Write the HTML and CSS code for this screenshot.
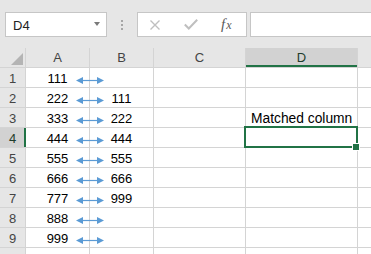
FILE: index.html
```html
<!DOCTYPE html>
<html>
<head>
<meta charset="utf-8">
<link rel="stylesheet" href="styles.css">
</head>
<body>
<div class="toolbar">
  <div class="namebox"><span class="ref">D4</span><span class="caret"></span></div>
  <div class="grip"><i></i><i></i><i></i></div>
  <div class="fxbar">
    <svg class="ic-x" width="12" height="10" viewBox="0 0 12 10"><path d="M1.5 0.5 L10.5 9.5 M10.5 0.5 L1.5 9.5" stroke="#bfbfbf" stroke-width="1.4" fill="none"/></svg>
    <svg class="ic-check" width="14" height="11" viewBox="0 0 14 11"><path d="M0.8 5.5 L4.8 9.5 L13.2 0.8" stroke="#bfbfbf" stroke-width="2" fill="none"/></svg>
    <span class="fx">f<span class="fx-x">x</span></span>
  </div>
  <div class="formula"></div>
</div>
<div class="sheet">
  <div class="corner"><svg width="12" height="12" viewBox="0 0 12 12"><polygon points="12,0 12,12 0,12" fill="#b4b4b4"/></svg></div>
  <div class="colh">A</div><div class="colh">B</div><div class="colh">C</div><div class="colh sel">D</div><div class="colh"></div>

  <div class="rowh">1</div><div class="cell ctr">111<span class="arrow"><svg width="28" height="7" viewBox="0 0 28 7"><line x1="6" y1="3.5" x2="22" y2="3.5" stroke="#5b9bd5" stroke-width="1.2"/><polygon points="0,3.5 7,0 7,7" fill="#5b9bd5"/><polygon points="28,3.5 21,0 21,7" fill="#5b9bd5"/></svg></span></div><div class="cell ctr"></div><div class="cell"></div><div class="cell"></div><div class="cell"></div>

  <div class="rowh">2</div><div class="cell ctr">222<span class="arrow"><svg width="28" height="7" viewBox="0 0 28 7"><line x1="6" y1="3.5" x2="22" y2="3.5" stroke="#5b9bd5" stroke-width="1.2"/><polygon points="0,3.5 7,0 7,7" fill="#5b9bd5"/><polygon points="28,3.5 21,0 21,7" fill="#5b9bd5"/></svg></span></div><div class="cell ctr">111</div><div class="cell"></div><div class="cell"></div><div class="cell"></div>

  <div class="rowh">3</div><div class="cell ctr">333<span class="arrow"><svg width="28" height="7" viewBox="0 0 28 7"><line x1="6" y1="3.5" x2="22" y2="3.5" stroke="#5b9bd5" stroke-width="1.2"/><polygon points="0,3.5 7,0 7,7" fill="#5b9bd5"/><polygon points="28,3.5 21,0 21,7" fill="#5b9bd5"/></svg></span></div><div class="cell ctr">222</div><div class="cell"></div><div class="cell txt">Matched column</div><div class="cell"></div>

  <div class="rowh sel">4</div><div class="cell ctr">444<span class="arrow"><svg width="28" height="7" viewBox="0 0 28 7"><line x1="6" y1="3.5" x2="22" y2="3.5" stroke="#5b9bd5" stroke-width="1.2"/><polygon points="0,3.5 7,0 7,7" fill="#5b9bd5"/><polygon points="28,3.5 21,0 21,7" fill="#5b9bd5"/></svg></span></div><div class="cell ctr">444</div><div class="cell"></div><div class="cell active"><span class="selbox"></span><span class="handle"></span></div><div class="cell"></div>

  <div class="rowh">5</div><div class="cell ctr">555<span class="arrow"><svg width="28" height="7" viewBox="0 0 28 7"><line x1="6" y1="3.5" x2="22" y2="3.5" stroke="#5b9bd5" stroke-width="1.2"/><polygon points="0,3.5 7,0 7,7" fill="#5b9bd5"/><polygon points="28,3.5 21,0 21,7" fill="#5b9bd5"/></svg></span></div><div class="cell ctr">555</div><div class="cell"></div><div class="cell"></div><div class="cell"></div>

  <div class="rowh">6</div><div class="cell ctr">666<span class="arrow"><svg width="28" height="7" viewBox="0 0 28 7"><line x1="6" y1="3.5" x2="22" y2="3.5" stroke="#5b9bd5" stroke-width="1.2"/><polygon points="0,3.5 7,0 7,7" fill="#5b9bd5"/><polygon points="28,3.5 21,0 21,7" fill="#5b9bd5"/></svg></span></div><div class="cell ctr">666</div><div class="cell"></div><div class="cell"></div><div class="cell"></div>

  <div class="rowh">7</div><div class="cell ctr">777<span class="arrow"><svg width="28" height="7" viewBox="0 0 28 7"><line x1="6" y1="3.5" x2="22" y2="3.5" stroke="#5b9bd5" stroke-width="1.2"/><polygon points="0,3.5 7,0 7,7" fill="#5b9bd5"/><polygon points="28,3.5 21,0 21,7" fill="#5b9bd5"/></svg></span></div><div class="cell ctr">999</div><div class="cell"></div><div class="cell"></div><div class="cell"></div>

  <div class="rowh">8</div><div class="cell ctr">888<span class="arrow"><svg width="28" height="7" viewBox="0 0 28 7"><line x1="6" y1="3.5" x2="22" y2="3.5" stroke="#5b9bd5" stroke-width="1.2"/><polygon points="0,3.5 7,0 7,7" fill="#5b9bd5"/><polygon points="28,3.5 21,0 21,7" fill="#5b9bd5"/></svg></span></div><div class="cell ctr"></div><div class="cell"></div><div class="cell"></div><div class="cell"></div>

  <div class="rowh">9</div><div class="cell ctr">999<span class="arrow"><svg width="28" height="7" viewBox="0 0 28 7"><line x1="6" y1="3.5" x2="22" y2="3.5" stroke="#5b9bd5" stroke-width="1.2"/><polygon points="0,3.5 7,0 7,7" fill="#5b9bd5"/><polygon points="28,3.5 21,0 21,7" fill="#5b9bd5"/></svg></span></div><div class="cell ctr"></div><div class="cell"></div><div class="cell"></div><div class="cell"></div>

  <div class="rowh"></div><div class="cell"></div><div class="cell"></div><div class="cell"></div><div class="cell"></div><div class="cell"></div>
</div>
</body>
</html>
```

FILE: styles.css
```css
* { box-sizing: border-box; }

body {
  margin: 0;
  width: 371px;
  height: 254px;
  overflow: hidden;
  background: #ffffff;
  font-family: "Liberation Sans", Arial, sans-serif;
  font-size: 13px;
  color: #000;
}

.toolbar {
  height: 48px;
  background: #e6e6e6;
  display: flex;
  align-items: flex-start;
  padding: 12px 0 0 5px;
}

.namebox {
  width: 102px;
  height: 25px;
  background: #fff;
  border: 1px solid #c6c6c6;
  display: flex;
  align-items: center;
  justify-content: space-between;
  padding: 1px 6px 0 7px;
  color: #222;
}

.caret {
  width: 0;
  height: 0;
  border-left: 3.5px solid transparent;
  border-right: 3.5px solid transparent;
  border-top: 4px solid #7a7a7a;
  margin-top: -2px;
}

.grip {
  width: 2px;
  margin: 8px 14px 0 14px;
  display: flex;
  flex-direction: column;
  gap: 2px;
}

.grip i {
  display: block;
  width: 2px;
  height: 2px;
  background: #a6a6a6;
}

.fxbar {
  width: 110px;
  height: 25px;
  background: #fff;
  border: 1px solid #c6c6c6;
  display: flex;
  align-items: center;
  padding-left: 11px;
}

.ic-x { margin-top: 1px; }

.ic-check { margin-left: 23px; }

.fx {
  margin-left: 23px;
  font-family: "Liberation Serif", "Times New Roman", serif;
  font-style: italic;
  font-size: 15px;
  color: #5a5a5a;
  line-height: 1;
  margin-top: -1px;
}

.fx-x { font-size: 12px; margin-left: 1px; }

.formula {
  flex: 1;
  height: 25px;
  margin-left: 3px;
  margin-right: -6px;
  background: #fff;
  border: 1px solid #c6c6c6;
}

.sheet {
  display: grid;
  grid-template-columns: 25px 63px 63px 91px 111px 1fr;
  grid-template-rows: repeat(10, 19px) 6px;
  gap: 1px;
  background: #d4d4d4;
}

.corner {
  background: #e6e6e6;
  display: flex;
  justify-content: flex-end;
  align-items: flex-end;
  padding: 0 2px 2px 0;
}

.corner svg { display: block; }

.colh {
  background: #e6e6e6;
  text-align: center;
  line-height: 19px;
  color: #444;
}

.colh.sel {
  background: #d2d2d2;
  box-shadow: inset 0 -2px 0 #217346;
  color: #1f3d2c;
}

.rowh {
  background: #e6e6e6;
  text-align: center;
  line-height: 19px;
  padding-top: 1px;
  color: #444;
  overflow: hidden;
}

.rowh.sel {
  background: #d2d2d2;
  box-shadow: inset -1px 0 0 #217346, 1px 0 0 #217346;
  color: #1f3d2c;
}

.cell {
  background: #fff;
  line-height: 19px;
  padding-top: 1px;
  position: relative;
  white-space: nowrap;
}

.ctr { text-align: center; }

.txt { padding-left: 5px; font-size: 13.8px; }

.arrow {
  position: absolute;
  left: 50px;
  top: 9px;
  width: 28px;
  height: 7px;
  z-index: 1;
}

.arrow svg { display: block; }

.selbox {
  position: absolute;
  left: -2px;
  top: -2px;
  right: -1px;
  bottom: -1px;
  border: 2px solid #217346;
  z-index: 2;
}

.handle {
  position: absolute;
  right: -3px;
  bottom: -4px;
  width: 8px;
  height: 8px;
  background: #217346;
  border: 1px solid #fff;
  z-index: 3;
}
```
